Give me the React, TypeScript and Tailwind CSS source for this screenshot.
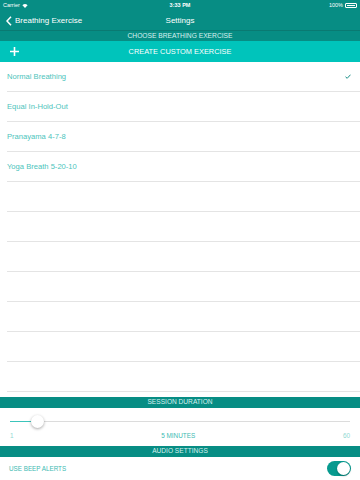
import React, { useState } from "react"

const exercises = ["Normal Breathing", "Equal In-Hold-Out", "Pranayama 4-7-8", "Yoga Breath 5-20-10"]

function SectionBar({ title }: { title: string }) {
  return (
    <div className="h-[11px] bg-[#078d84] flex items-center justify-center">
      <span className="text-[6.6px] leading-none text-[#d9f1ef]">{title}</span>
    </div>
  )
}

export default function App() {
  const [selected, setSelected] = useState(0)
  const [beep, setBeep] = useState(true)
  const rows = [...exercises, "", "", "", "", "", "", ""]

  return (
    <div className="w-[360px] h-[480px] overflow-hidden bg-white" style={{ fontFamily: '"Liberation Sans", Arial, sans-serif' }}>
      {/* Status + nav */}
      <div className="bg-[#078d84] h-[30px] text-white">
        <div className="h-[11px] px-[3px] flex items-center justify-between text-[5.5px]">
          <div className="flex items-center gap-[2px] w-[60px]">
            <span>Carrier</span>
            <svg width="6" height="4" viewBox="0 0 14 10">
              <path d="M7 10 L0.5 3.2 A9.5 9.5 0 0 1 13.5 3.2 Z" fill="white" />
            </svg>
          </div>
          <span className="font-bold">3:33 PM</span>
          <div className="flex items-center justify-end gap-[2px] w-[60px]">
            <span>100%</span>
            <div className="w-[12px] h-[5px] border border-white rounded-[1px] p-[1px] flex">
              <div className="flex-1 bg-white" />
            </div>
          </div>
        </div>
        <div className="relative h-[19px] flex items-center justify-center">
          <div className="absolute left-[6px] top-0 h-full flex items-center gap-[3px]">
            <svg width="6" height="10" viewBox="0 0 6 10">
              <path d="M5 0.8 L1 5 L5 9.2" stroke="white" strokeWidth="1.5" fill="none" />
            </svg>
            <span className="text-[8px]">Breathing Exercise</span>
          </div>
          <span className="text-[8px]">Settings</span>
        </div>
      </div>
      <div className="h-px bg-[#0a7a72]" />
      <div className="h-[10px] bg-[#078d84] flex items-center justify-center">
        <span className="text-[6.7px] leading-none text-[#d9f1ef]">CHOOSE BREATHING EXERCISE</span>
      </div>
      <button className="relative w-full h-[21px] bg-[#00c4bb] flex items-center justify-center text-white">
        <svg className="absolute left-[10px] top-[6px]" width="9" height="9" viewBox="0 0 9 9">
          <path d="M4.5 0 V9 M0 4.5 H9" stroke="white" strokeWidth="1.6" />
        </svg>
        <span className="text-[7.4px]">CREATE CUSTOM EXERCISE</span>
      </button>

      {/* list */}
      <div>
        {rows.map((name, i) => (
          <div key={i} className="pl-[7px]" onClick={() => name && setSelected(i)}>
            <div className="h-[30px] border-b border-[#e4e4e4] flex items-center justify-between pr-[9px]">
              <span className="text-[7.6px] text-[#4cc4bc]">{name}</span>
              {name && selected === i && (
                <svg width="6" height="5" viewBox="0 0 6 5">
                  <path d="M0.5 2.8 L2.2 4.3 L5.5 0.7" stroke="#1a8f87" strokeWidth="1" fill="none" />
                </svg>
              )}
            </div>
          </div>
        ))}
      </div>

      <div className="h-[5px]" />
      <SectionBar title="SESSION DURATION" />

      {/* slider */}
      <div className="px-[10px] pt-[6px] pb-[2px]">
        <div className="relative h-[14px] flex items-center">
          <div className="h-px w-full bg-[#dcdcdc]" />
          <div className="absolute left-0 h-px w-[24px] bg-[#3cc4bb]" />
          <div className="absolute left-[21px] w-[13px] h-[13px] rounded-full bg-white shadow-[0_1px_3px_rgba(0,0,0,0.35)]" />
        </div>
        <div className="flex items-center justify-between h-[16px] text-[6.4px] text-[#8fd8d2]">
          <span>1</span>
          <span className="text-[#3cbab2]">5 MINUTES</span>
          <span>60</span>
        </div>
      </div>
      <SectionBar title="AUDIO SETTINGS" />

      <div className="h-[23px] pl-[9px] pr-[9px] flex items-center justify-between">
        <span className="text-[6.3px] text-[#3cbab2]">USE BEEP ALERTS</span>
        <button
          onClick={() => setBeep(!beep)}
          className={`w-[24px] h-[15px] rounded-full p-[1px] flex ${beep ? "bg-[#079a8f] justify-end" : "bg-[#ddd] justify-start"}`}
        >
          <span className="w-[13px] h-[13px] rounded-full bg-white shadow-[0_1px_2px_rgba(0,0,0,0.3)]" />
        </button>
      </div>
    </div>
  )
}
